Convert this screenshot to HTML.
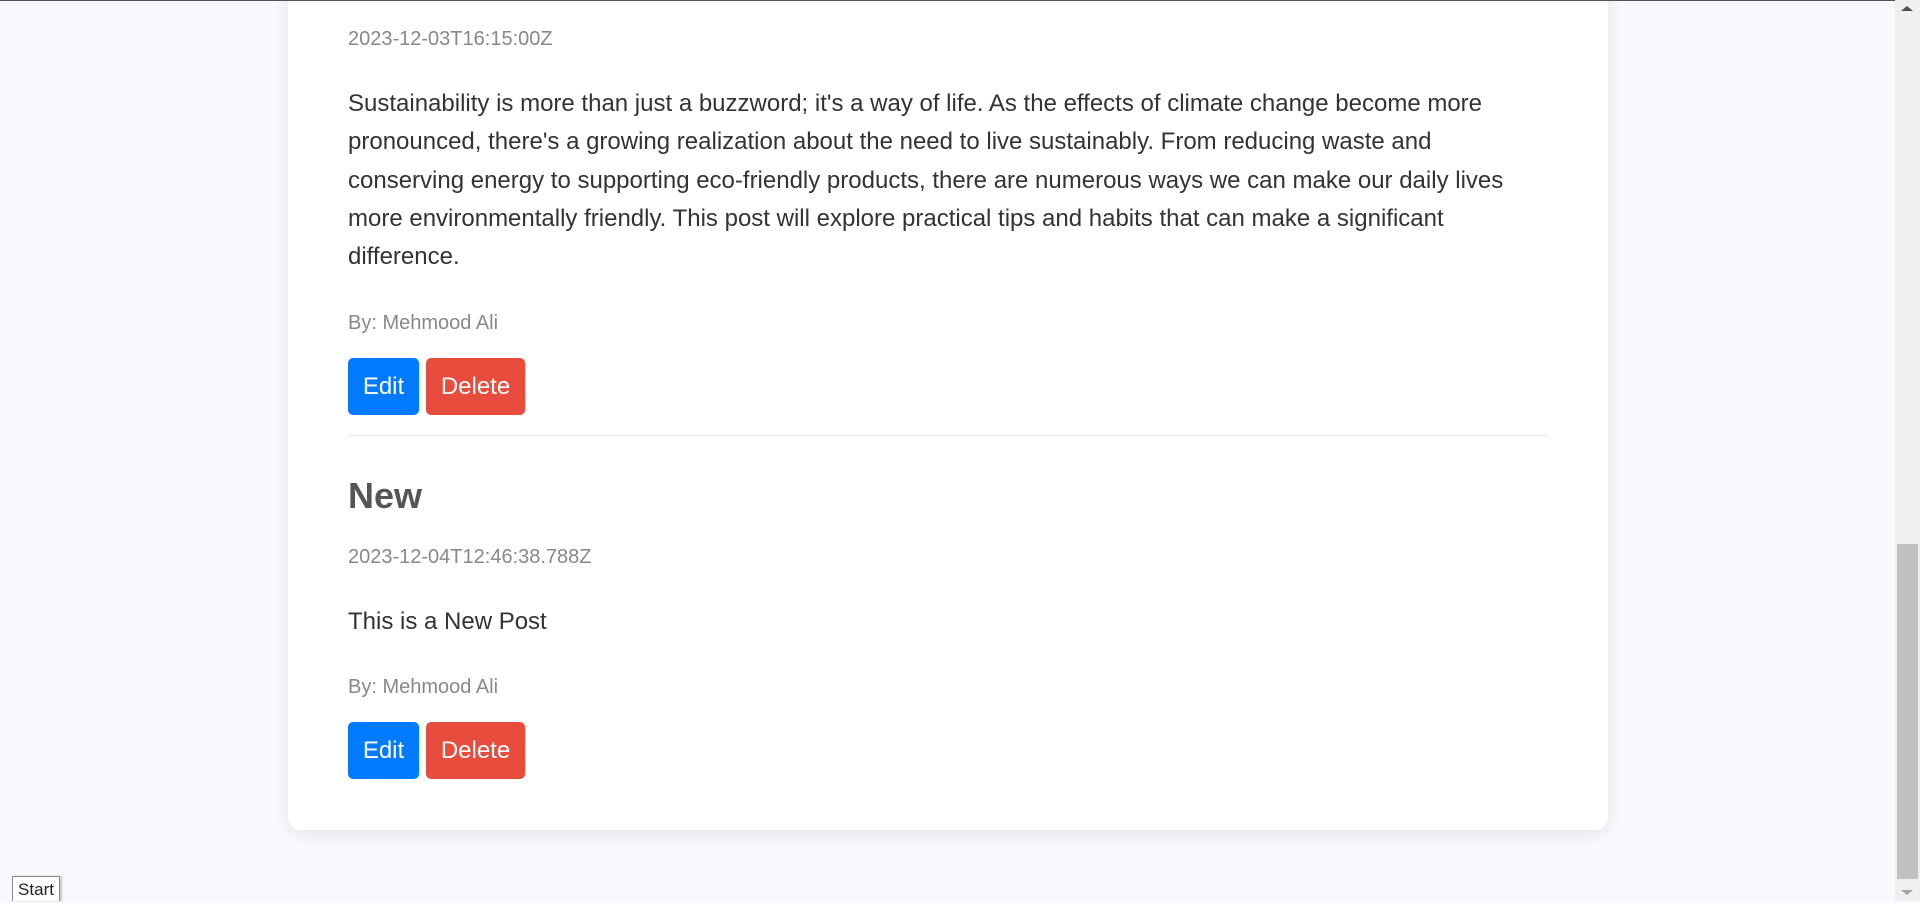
<!DOCTYPE html>
<html><head><meta charset="utf-8"><style>
html,body{margin:0;padding:0;width:1920px;height:901px;overflow:hidden;background:#f7f9fc;font-family:"Liberation Sans",Arial,sans-serif;color:#333}
.top{position:absolute;left:0;top:0;width:1895px;height:1px;background:#555}
.card{position:absolute;left:288px;top:-40px;width:1320px;height:870px;background:#fff;border-radius:12px;box-shadow:0 4px 16px rgba(0,0,0,0.08)}
.t{position:absolute;left:348px;white-space:nowrap}
.date{font-size:20px;color:#888;line-height:24px}
.p{font-size:24px;line-height:38.3px;color:#333;white-space:normal;width:1200px}
.btn{position:absolute;height:57px;border-radius:5px;color:#fff;font-size:24px;line-height:57px;text-align:center}
.edit{background:#007bff;width:71px;left:348px}
.del{background:#e74c3c;width:99px;left:426px}
.hr{position:absolute;left:348px;top:435px;width:1200px;height:1px;background:#eee}
.sb{position:absolute;left:1895px;top:0;width:25px;height:901px;background:#f0f0f0}
.thumb{position:absolute;left:1897px;top:544px;width:21px;height:335px;background:#c1c1c1}
.start{position:absolute;left:12px;top:876px;width:48px;height:25px;border:1px solid #888;border-bottom:none;background:#fff;font-size:17px;line-height:26px;text-align:center;color:#222;box-sizing:border-box;box-shadow:2px 0 2px rgba(0,0,0,0.2)}
</style></head><body>
<div class="card"></div>
<div class="top"></div>
<div class="t date" style="top:27px">2023-12-03T16:15:00Z</div>
<div class="t p" style="top:85px">Sustainability is more than just a buzzword; it's a way of life. As the effects of climate change become more pronounced, there's a growing realization about the need to live sustainably. From reducing waste and conserving energy to supporting eco-friendly products, there are numerous ways we can make our daily lives more environmentally friendly. This post will explore practical tips and habits that can make a significant difference.</div>
<div class="t date" style="top:311px">By: Mehmood Ali</div>
<div class="btn edit" style="top:358px">Edit</div>
<div class="btn del" style="top:358px">Delete</div>
<div class="hr"></div>
<div class="t" style="top:475px;font-size:36px;font-weight:bold;color:#555;line-height:42px">New</div>
<div class="t date" style="top:545px">2023-12-04T12:46:38.788Z</div>
<div class="t p" style="top:603px">This is a New Post</div>
<div class="t date" style="top:675px">By: Mehmood Ali</div>
<div class="btn edit" style="top:722px">Edit</div>
<div class="btn del" style="top:722px">Delete</div>
<div class="sb"></div>
<div class="thumb"></div>
<div style="position:absolute;left:1901px;top:6px;width:0;height:0;border-left:6px solid transparent;border-right:6px solid transparent;border-bottom:5px solid #505050"></div>
<div style="position:absolute;left:1901px;top:890px;width:0;height:0;border-left:6px solid transparent;border-right:6px solid transparent;border-top:5px solid #a3a3a3"></div>
<div class="start">Start</div>
</body></html>
